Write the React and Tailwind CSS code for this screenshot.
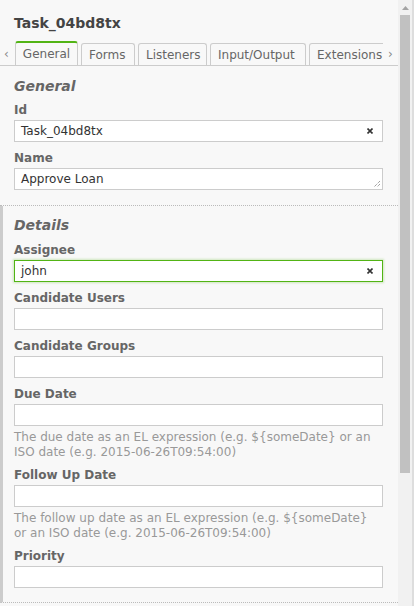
import React from 'react';

const font = { fontFamily: '"DejaVu Sans", Verdana, sans-serif' };

function ClearIcon() {
    return (
        <svg width="6" height="6" viewBox="0 0 6 6" className="shrink-0">
            <path d="M0.5 0.5 L5.5 5.5 M5.5 0.5 L0.5 5.5" stroke="#333" strokeWidth="1.6" />
        </svg>
    );
}

function ResizeHandle() {
    return (
        <svg width="8" height="8" viewBox="0 0 8 8" className="absolute right-[1px] bottom-[1px]">
            <path d="M7 1 L1 7 M7 4 L4 7" stroke="#777" strokeWidth="1" strokeDasharray="1 1" />
        </svg>
    );
}

function Field({ label, value, clear, textarea, focused, description, first, afterDesc }) {
    const top = first || afterDesc ? 'mt-[7px]' : 'mt-[8px]';
    return (
        <div className={top}>
            <div className="h-[16px] leading-[16px] text-[12px] font-bold text-[#666]">{label}</div>
            <div
                className={`relative mt-[2px] flex h-[22px] items-center justify-between bg-white pl-[6px] pr-[9px] text-[12px] text-[#333] border ${
                    focused ? 'border-[#52b415] shadow-[0_0_2px_1px_rgba(82,180,21,0.25)]' : 'border-[#ccc]'
                }`}
            >
                <span>{value}</span>
                {clear && <ClearIcon />}
                {textarea && <ResizeHandle />}
            </div>
            {description && (
                <div className="mt-[4px] text-[12px] leading-[15px] text-[#999] pr-[4px]">{description}</div>
            )}
        </div>
    );
}

function Tab({ label, width }) {
    return (
        <div
            className={`shrink-0 h-[23px] rounded-t-[3px] border-x border-t border-[#ccc] px-[7px] text-[12px] leading-[22px] text-[#666] whitespace-nowrap ${width}`}
        >
            {label}
        </div>
    );
}

export default function App() {
    return (
        <div className="flex h-[606px] w-[414px] overflow-hidden bg-[#f8f8f8]" style={font}>
            <div className="flex-1 min-w-0 flex flex-col">
                {/* Title */}
                <div className="h-[41px] shrink-0 pl-[14px] pt-[15px] text-[14px] leading-[17px] font-bold text-[#444]">
                    Task_04bd8tx
                </div>

                {/* Tabs */}
                <div className="flex shrink-0 h-[25px] border-b border-[#ccc]">
                    <div className="w-[15px] text-[12px] leading-[26px] text-[#888] pl-[4px]">‹</div>
                    <div className="flex-1 min-w-0 overflow-hidden">
                        <div className="flex items-end gap-[3px] h-[25px]">
                            <div className="shrink-0 h-[25px] w-[63px] rounded-t-[3px] border-x border-[#ccc] border-t-2 border-t-[#52b415] bg-[#f8f8f8] text-[12px] leading-[22px] text-[#666] text-center">
                                General
                            </div>
                            <Tab label="Forms" width="w-[54px]" />
                            <Tab label="Listeners" width="w-[69px]" />
                            <Tab label="Input/Output" width="w-[96px]" />
                            <Tab label="Extensions" width="w-[82px]" />
                        </div>
                    </div>
                    <div className="w-[15px] text-[12px] leading-[26px] text-[#888] pl-[5px]">›</div>
                </div>

                {/* General group */}
                <div className="shrink-0 pl-[14px] pr-[15px] pt-[11px] pb-[15px]">
                    <div className="h-[18px] leading-[18px] text-[14px] font-bold italic text-[#666]">General</div>
                    <Field label="Id" value="Task_04bd8tx" clear first />
                    <Field label="Name" value="Approve Loan" textarea />
                </div>

                {/* Details group */}
                <div className="shrink-0 border-t border-dotted border-[#bbb]">
                    <div
                        className="border-l-[3px] border-[#ccc] pl-[11px] pr-[15px] pt-[10px] pb-[14px] border-b border-b-[#bbb]"
                        style={{ borderBottomStyle: 'dotted' }}
                    >
                        <div className="h-[18px] leading-[18px] text-[14px] font-bold italic text-[#666]">Details</div>
                        <Field label="Assignee" value="john" clear focused />
                        <Field label="Candidate Users" value="" />
                        <Field label="Candidate Groups" value="" />
                        <Field
                            label="Due Date"
                            value=""
                            description="The due date as an EL expression (e.g. ${someDate} or an ISO date (e.g. 2015-06-26T09:54:00)"
                        />
                        <Field
                            label="Follow Up Date"
                            value=""
                            afterDesc
                            description="The follow up date as an EL expression (e.g. ${someDate} or an ISO date (e.g. 2015-06-26T09:54:00)"
                        />
                        <Field label="Priority" value="" afterDesc />
                    </div>
                </div>
            </div>

            {/* Scrollbar */}
            <div className="w-[16px] shrink-0 flex flex-col bg-[#f1f1f1] border-r-2 border-[#ddd]">
                <div className="h-[15px] flex items-center justify-center">
                    <svg width="7" height="4" viewBox="0 0 7 4">
                        <path d="M0 4 L3.5 0 L7 4 Z" fill="#a3a3a3" />
                    </svg>
                </div>
                <div className="mx-[2px] h-[458px] bg-[#c1c1c1]" />
            </div>
        </div>
    );
}
